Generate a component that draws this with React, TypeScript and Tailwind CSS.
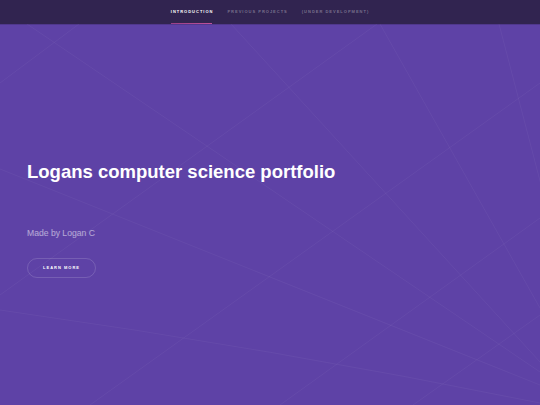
const lines: [number, number, number, number][] = [
  [27, 24, 540, 372],
  [0, 83, 79, 24],
  [0, 169, 540, 385],
  [0, 295, 377, 24],
  [380, 24, 540, 308],
  [231, 24, 540, 362],
  [540, 83, 90, 405],
  [540, 218, 280, 405],
  [540, 315, 413, 405],
  [499, 24, 545, 200],
];

const navItems = [
  { label: "Introduction", active: true },
  { label: "Previous Projects", active: false },
  { label: "(Under development)", active: false },
];

export default function App() {
  return (
    <div
      className="flex h-[405px] w-[540px] flex-col overflow-hidden bg-[#5e42a6]"
      style={{ fontFamily: '"Liberation Sans", Arial, sans-serif' }}
    >
      <nav className="flex h-[24px] shrink-0 items-stretch justify-center gap-[14px] bg-[#312450] shadow-[0_1px_0_rgba(0,0,0,0.15)]">
        {navItems.map((item) => (
          <a
            key={item.label}
            href="#"
            className={`relative flex items-center text-[4px] font-bold uppercase tracking-[0.25em] ${
              item.active ? "text-white" : "text-white/35"
            }`}
          >
            {item.label}
            {item.active && (
              <span className="absolute bottom-0 left-0 right-[1px] h-[1px] bg-gradient-to-r from-[#9a3f87] to-[#c0519a]" />
            )}
          </a>
        ))}
      </nav>

      <section className="relative flex-1 px-[27px]">
        <svg
          className="absolute inset-0 h-full w-full"
          viewBox="0 24 540 381"
          preserveAspectRatio="none"
        >
          {lines.map(([x1, y1, x2, y2], i) => (
            <line key={i} x1={x1} y1={y1} x2={x2} y2={y2} stroke="rgba(255,255,255,0.06)" strokeWidth="0.8" />
          ))}
          <path d="M0 310 Q 270 348 540 403" fill="none" stroke="rgba(255,255,255,0.06)" strokeWidth="0.8" />
        </svg>

        <div className="relative pt-[136px]">
          <h1 className="text-[18.5px] font-bold leading-[24px] text-white">
            Logans computer science portfolio
          </h1>
          <p className="mt-[43px] text-[8.6px] leading-[13px] text-white/55">Made by Logan C</p>
          <a
            href="#"
            className="mt-[18px] flex h-[20px] w-[69px] items-center justify-center rounded-full border border-white/15 text-[4px] font-bold uppercase tracking-[0.25em] text-white"
          >
            Learn more
          </a>
        </div>
      </section>
    </div>
  );
}
